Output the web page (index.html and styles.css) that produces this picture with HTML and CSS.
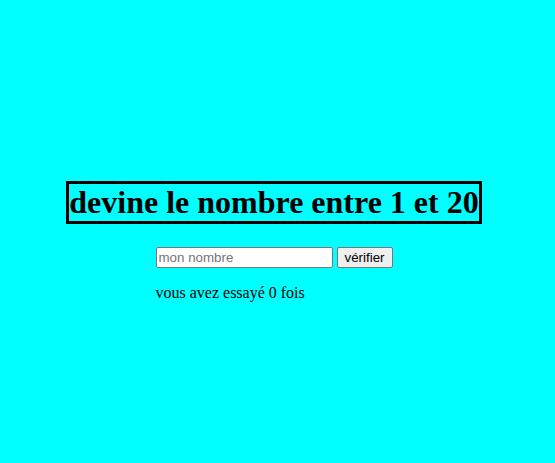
FILE: index.html
```html
<!DOCTYPE html>
<html lang="fr">
<head>
<meta charset="utf-8">
<title>Devine</title>
<link rel="stylesheet" href="styles.css">
</head>
<body>
<main class="page">
  <h1 class="title">devine le nombre entre 1 et 20</h1>
  <div class="game">
    <form class="guess">
      <input class="guess-input" type="text" placeholder="mon nombre">
      <button class="guess-btn" type="button">vérifier</button>
    </form>
    <p class="tries">vous avez essayé 0 fois</p>
  </div>
</main>
</body>
</html>
```
FILE: styles.css
```css
html, body {
  margin: 0;
  padding: 0;
  background: #00ffff;
}
body {
  font-family: "Liberation Serif", "Times New Roman", serif;
  color: #000;
}
.page {
  display: flex;
  flex-direction: column;
  align-items: center;
  padding-top: 181px;
  padding-right: 7px;
}
.title {
  margin: 0;
  border: 3px solid #000;
  font-size: 32px;
  font-weight: bold;
  line-height: 37px;
  padding: 0 0.5px;
}
.game {
  width: 243px;
  margin-top: 23px;
  padding-left: 6px;
}
.guess {
  display: flex;
  gap: 4px;
  margin: 0;
}
.guess-input {
  box-sizing: border-box;
  width: 177px;
  height: 21px;
  padding: 1px 2px;
  border: 1px solid #767676;
  border-radius: 2px;
  font-family: "Liberation Sans", Arial, sans-serif;
  font-size: 13.333px;
  background: #fff;
}
.guess-input::placeholder {
  color: #757575;
}
.guess-btn {
  box-sizing: border-box;
  width: 56px;
  height: 21px;
  padding: 0 4px;
  border: 1px solid #767676;
  border-radius: 2px;
  background: #efefef;
  font-family: "Liberation Sans", Arial, sans-serif;
  font-size: 13.333px;
  color: #000;
}
.tries {
  margin: 16px 0 0;
  font-size: 16px;
  line-height: 18px;
}
```
